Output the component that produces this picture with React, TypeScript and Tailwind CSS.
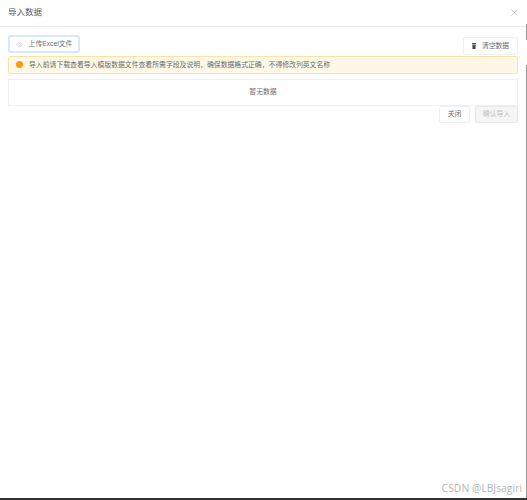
import React from 'react';
import { Eye, X } from 'lucide-react';

const FONT = "font-['Liberation_Sans','Noto_Sans_CJK_SC',sans-serif]";

export default function App() {
  return (
    <div className={`${FONT} relative h-[500px] w-[527px] overflow-hidden bg-white text-[#6b6e75]`}>
      {/* header */}
      <div className="flex h-[27px] items-center justify-between border-b border-[#eeeeee] pb-[2px] pl-[8px] pr-[7px]">
        <span className="text-[8.5px] text-[#555b66]">导入数据</span>
        <X size={11} strokeWidth={1} className="text-[#8f9297]" />
      </div>

      {/* body */}
      <div className="pl-[8px] pr-[9px]">
        <div className="flex items-start justify-between pt-[8px]">
          <button className="flex h-[18px] w-[72px] items-center justify-center gap-[6px] rounded-[2px] border-2 border-[#d9e8fb] text-[6.8px]">
            <Eye size={7} className="text-[#c4c6ca]" />
            上传Excel文件
          </button>
          <button className="mt-[2px] flex h-[18px] w-[55px] items-center justify-center gap-[6px] rounded-[2px] border border-[#eef0f5] text-[6.8px]">
            <svg width="4" height="6" viewBox="0 0 4 6" className="text-[#444a5a]">
              <path d="M0 0h4v1H0zM.4 1.5h3.2V6H.4z" fill="currentColor" />
            </svg>
            清空数据
          </button>
        </div>

        <div className="mt-[1px] flex h-[18px] items-center gap-[6px] rounded-[2px] border border-[#fbe3a8] bg-[#fff8e6] pl-[7px] text-[6.85px]">
          <span className="mb-[2px] h-[7px] w-[7px] rounded-full bg-[#fa9a14]" />
          导入前请下载查看导入模版数据文件查看所需字段及说明，确保数据格式正确，不得修改列英文名称
        </div>

        <div className="mt-[5px] flex h-[27px] items-center justify-center border border-[#eef0f5] text-[6.85px]">
          暂无数据
        </div>

        <div className="flex justify-end gap-[5px]">
          <button className="h-[17px] w-[31px] rounded-[2px] border border-[#eef0f5] text-[6.85px]">关闭</button>
          <button className="h-[17px] w-[43px] rounded-[2px] border border-[#e8e8e8] bg-[#f5f5f5] text-[6.85px] text-[#bdbfc3]">确认导入</button>
        </div>
      </div>

      {/* watermark */}
      <span className="absolute bottom-[3px] right-[5px] font-['Open_Sans',sans-serif] text-[10.4px] text-[#b5b5b5]">
        CSDN @LBJsagiri
      </span>
      {/* screenshot edges */}
      <div className="absolute right-0 top-[24px] h-[16px] w-px bg-[#999]" />
      <div className="absolute bottom-0 right-0 top-[65px] w-px bg-[#999]" />
      <div className="absolute bottom-0 left-0 h-[2px] w-full bg-[#333]" />
    </div>
  );
}
